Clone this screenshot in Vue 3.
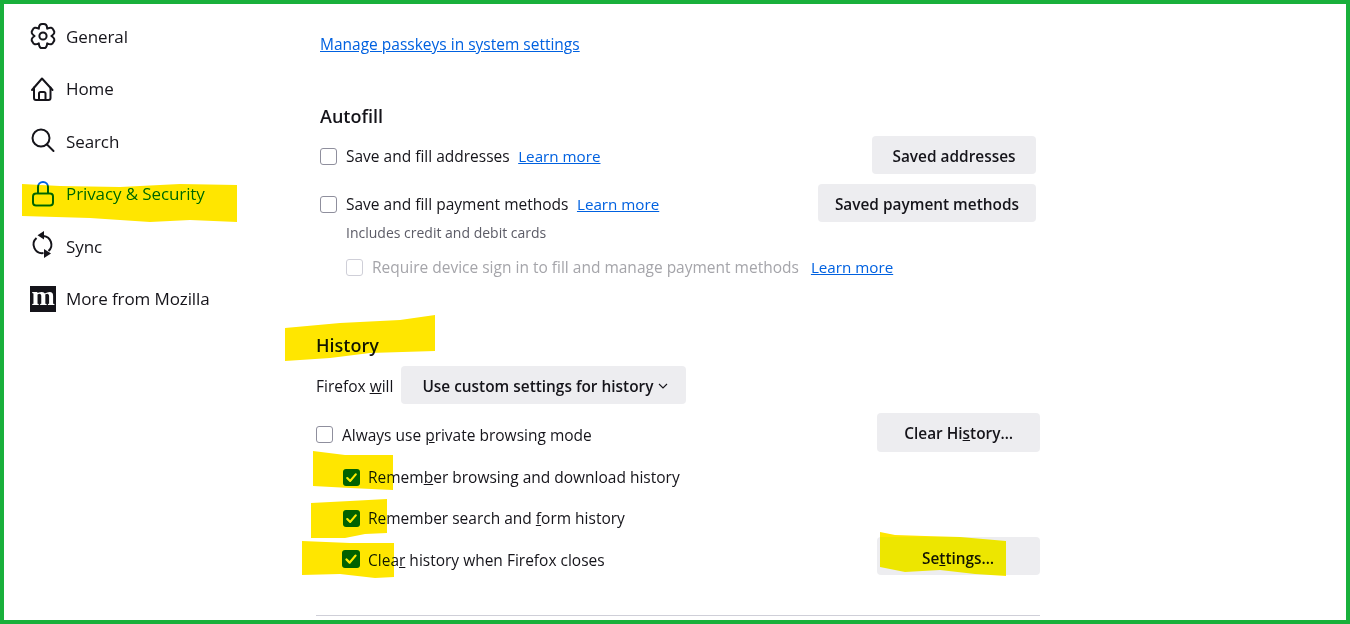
<script setup>
const nav = [
  { id: 'general', label: 'General' },
  { id: 'home', label: 'Home' },
  { id: 'search', label: 'Search' },
  { id: 'privacy', label: 'Privacy & Security', active: true },
  { id: 'sync', label: 'Sync' },
  { id: 'mozilla', label: 'More from Mozilla' },
]
const marks = [
  '22,184 60,186 120,187 180,184 237,185 237,222 190,220 150,222 90,218 22,216',
  '285,328 340,323 400,320 435,315 435,351 370,353 330,358 285,361',
  '313,451 345,455 393,455 393,490 350,488 313,486',
  '311,503 350,501 387,499 387,533 365,534 345,538 311,538',
  '302,541 350,543 394,543 394,577 375,578 340,574 302,575',
  '880,532 895,535 925,536 960,537 1006,541 1006,576 975,574 940,570 905,572 880,567',
]
const pt = (deg, r) => {
  const a = (deg * Math.PI) / 180
  return `${(13 + r * Math.cos(a)).toFixed(2)} ${(13 + r * Math.sin(a)).toFixed(2)}`
}
let gear = `M${pt(-120, 8.4)}`
for (let i = 0; i < 6; i++) {
  const a = -90 + i * 60
  gear += `Q${pt(a - 17, 13.4)} ${pt(a, 12)}Q${pt(a + 17, 13.4)} ${pt(a + 30, 8.4)}`
}
gear += 'Z'
</script>

<template>
  <div class="frame">
    <nav class="side">
      <div v-for="n in nav" :key="n.id" class="nav" :class="{ active: n.active }">
        <span class="ico">
          <svg v-if="n.id === 'general'" viewBox="0 0 26 26" fill="none" stroke="currentColor" stroke-width="2" stroke-linejoin="round">
            <path :d="gear" />
            <circle cx="13" cy="13" r="3.6" />
          </svg>
          <svg v-else-if="n.id === 'home'" viewBox="0 0 26 26" fill="none" stroke="currentColor" stroke-width="2" stroke-linejoin="round" stroke-linecap="round">
            <path d="M2 14 12 2.500 22.500 14" />
            <path d="M4 11.500V22a2 2 0 0 0 2 2h12.500a2 2 0 0 0 2-2V11.500" />
            <path d="M9 24v-6.500a1.500 1.500 0 0 1 1.500-1.500h3.500a1.500 1.500 0 0 1 1.500 1.500V24" />
          </svg>
          <svg v-else-if="n.id === 'search'" viewBox="0 0 26 26" fill="none" stroke="currentColor" stroke-width="2" stroke-linecap="round">
            <circle cx="11" cy="10" r="8.500" />
            <path d="m17 16.500 6.500 6.500" />
          </svg>
          <svg v-else-if="n.id === 'privacy'" viewBox="0 0 26 26" fill="none" stroke="currentColor" stroke-width="2">
            <path d="M8 12.500V6a5 5 0 0 1 10 0v6.500" />
            <rect x="3" y="12.500" width="20" height="12" rx="3" />
          </svg>
          <svg v-else-if="n.id === 'sync'" viewBox="0 0 26 26" fill="none" stroke="currentColor" stroke-width="2">
            <path d="M13.500 2.900A8.700 8.700 0 0 1 18.500 18" />
            <path d="M6.500 5A8.700 8.700 0 0 0 13.500 20.100" />
            <path d="M14-2V6.500L7.500 2.200z" fill="currentColor" stroke="none" />
            <path d="M14 16V25L21 20.500z" fill="currentColor" stroke="none" />
          </svg>
          <span v-else class="moz">m</span>
        </span>
        <span class="nav-label">{{ n.label }}</span>
      </div>
    </nav>

    <main class="main">
      <section class="autofill">
        <p class="top-link"><a>Manage passkeys in system settings</a></p>
        <h2 class="h-autofill">Autofill</h2>
        <div class="row row-addr">
          <label class="chk nudge"><span class="box"></span><span>Save and fill addresses</span></label>
          <a class="learn nudge">Learn more</a>
          <button class="btn btn-right btn-addr">Saved addresses</button>
        </div>
        <div class="row row-pay">
          <label class="chk nudge"><span class="box"></span><span>Save and fill payment methods</span></label>
          <a class="learn nudge">Learn more</a>
          <button class="btn btn-right btn-pay">Saved payment methods</button>
        </div>
        <p class="hint">Includes credit and debit cards</p>
        <div class="row row-dev">
          <label class="chk off"><span class="box box-off"></span><span>Require device sign in to fill and manage payment methods</span></label>
          <a class="learn learn-dev">Learn more</a>
        </div>
      </section>

      <section class="history">
        <h2 class="h-history">History</h2>
        <div class="row row-will">
          <span class="will">Firefox <u>w</u>ill</span>
          <button class="btn select">
            <span>Use custom settings for history</span>
            <svg class="chev" viewBox="0 0 10 6" fill="none" stroke="currentColor" stroke-width="1.100"><path d="m1 1 4 4 4-4" /></svg>
          </button>
        </div>
        <div class="row row-always">
          <label class="chk chk-low"><span class="box"></span><span>Always use <u>p</u>rivate browsing mode</span></label>
          <button class="btn btn-right btn-hist"><span>Clear Hi<u>s</u>tory…</span></button>
        </div>
        <div class="sub sub-1">
          <label class="chk"><span class="box on"><svg viewBox="0 0 16 16" fill="none" stroke="#fff" stroke-width="2" stroke-linecap="round" stroke-linejoin="round"><path d="m4 8.500 2.800 2.700L12 5" /></svg></span><span>Remem<u>b</u>er browsing and download history</span></label>
        </div>
        <div class="sub sub-2">
          <label class="chk"><span class="box on"><svg viewBox="0 0 16 16" fill="none" stroke="#fff" stroke-width="2" stroke-linecap="round" stroke-linejoin="round"><path d="m4 8.500 2.800 2.700L12 5" /></svg></span><span>Remember search and <u>f</u>orm history</span></label>
        </div>
        <div class="row sub sub-3">
          <label class="chk chk-clear"><span class="box on"><svg viewBox="0 0 16 16" fill="none" stroke="#fff" stroke-width="2" stroke-linecap="round" stroke-linejoin="round"><path d="m4 8.500 2.800 2.700L12 5" /></svg></span><span class="clear-text">Clea<u>r</u> history when Firefox closes</span></label>
          <button class="btn btn-right btn-set"><span>Se<u>t</u>tings…</span></button>
        </div>
        <hr class="rule" />
      </section>
    </main>

    <svg class="marks" viewBox="0 0 1350 624" aria-hidden="true">
      <polygon v-for="(m, i) in marks" :key="i" :points="m" fill="#ffe600" />
    </svg>
  </div>
</template>

<style>
html, body { margin: 0; background: #fff; }
</style>

<style scoped>
.frame {
  position: relative;
  box-sizing: border-box;
  width: 1350px;
  height: 624px;
  border: 4px solid #19b03b;
  background: #fff;
  display: flex;
  overflow: hidden;
  font-family: "Open Sans", "Noto Sans", sans-serif;
  font-size: 15.500px;
  color: #15141a;
}
.side { width: 312px; flex: none; padding: 6px 0 0 26px; box-sizing: border-box; }
.nav { display: flex; align-items: center; height: 52.500px; font-size: 17px; letter-spacing: -0.100px; }
.nav.active { color: #0061e0; }
.ico { width: 26px; height: 26px; margin-right: 10px; flex: none; display: block; }
.ico svg { display: block; width: 26px; height: 26px; overflow: visible; }
.moz { display: block; width: 26px; height: 26px; background: #15141a; color: #fff; font: 700 28px/19px "Liberation Serif", serif; text-align: center; }
.main { flex: none; width: 724px; }
.autofill { margin-left: 4px; width: 716px; }
.top-link { margin: 29px 0 0; line-height: 22px; }
a { color: #0061e0; text-decoration: underline; }
h2 { margin: 0; font-size: 18px; font-weight: 600; line-height: 24px; }
.h-autofill { margin-top: 49px; }
.row { display: flex; align-items: center; }
.chk { display: flex; align-items: center; }
.nudge { margin-top: 2px; }
.box { box-sizing: border-box; width: 17px; height: 17px; border: 1px solid #8f8f9d; border-radius: 3px; margin-right: 9px; flex: none; }
.box-off { border-color: #cfcfd8; }
.box.on { border: none; background: #0061e0; margin-left: 1px; margin-right: 8px; }
.box.on svg { display: block; width: 100%; height: 100%; }
.off { color: #a5a5aa; }
.learn { margin-left: 8.500px; font-size: 15.200px; }
.learn-dev { margin-left: 12px; }
.btn {
  border: none;
  border-radius: 4px;
  background: #ededf0;
  color: #15141a;
  font: 600 15.400px "Open Sans", "Noto Sans", sans-serif;
  height: 38px;
  padding: 0 21px;
}
.btn-right { margin-left: auto; }
.row-addr { margin-top: 7px; height: 40px; }
.row-pay { margin-top: 9px; height: 38px; }
.btn-addr { padding: 2px 20.500px 0; }
.btn-pay { padding: 2px 17px 0; }
.hint { margin: 1px 0 0 26px; font-size: 14px; color: #5b5b66; line-height: 20px; }
.row-dev { margin: 14px 0 0 26px; height: 20px; }
.history { margin-top: 56px; }
.row-will { margin-top: 9px; height: 38px; }
.will { position: relative; top: 1px; }
.select { margin-left: 8px; display: flex; align-items: center; gap: 5px; padding: 2px 18px 0 21px; }
.chev { width: 10px; height: 6px; }
.row-always { margin-top: 9px; height: 39px; }
.chk-low { margin-top: 4px; }
.btn-hist { height: 39px; padding: 2px 27px 0; }
.sub { margin-left: 26px; }
.sub-1 { margin-top: 14px; height: 20px; }
.sub-2 { margin-top: 21px; height: 20px; }
.sub-3 { margin-top: 10px; height: 38px; }
.chk-clear { margin-top: 6px; }
.chk-clear .box { width: 18px; height: 18px; margin-left: 0; margin-right: 8px; }
.clear-text { padding-top: 2px; }
.btn-set { padding: 4px 45px 0; width: 163px; text-align: left; }
.rule { border: none; border-top: 1px solid #cfcfd8; margin: 40px 0 0; }
.marks { position: absolute; left: -4px; top: -4px; width: 1350px; height: 624px; mix-blend-mode: darken; pointer-events: none; }
</style>
